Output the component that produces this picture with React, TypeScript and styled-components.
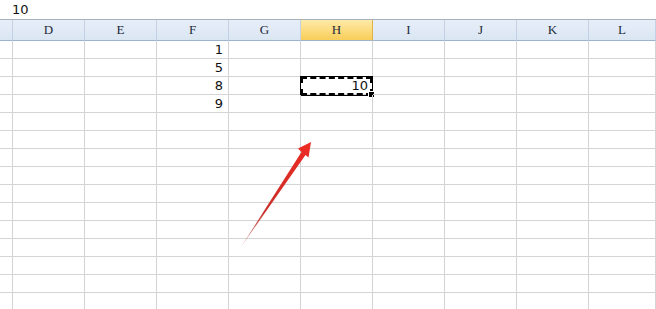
import styled, { createGlobalStyle } from "styled-components";

const GlobalStyle = createGlobalStyle`
  html, body {
    margin: 0;
    padding: 0;
    background: #fff;
    overflow: hidden;
  }
`;

const Sheet = styled.div`
  position: relative;
  width: 656px;
  height: 309px;
  overflow: hidden;
  background: #fff;
  font-family: "DejaVu Sans", "Liberation Sans", sans-serif;
`;

const FormulaBar = styled.div`
  box-sizing: border-box;
  height: 20px;
  padding-left: 12px;
  border-bottom: 1px solid #a9b1ba;
  font-size: 13px;
  line-height: 19px;
  color: #111;
`;

const Grid = styled.div`
  display: grid;
  grid-template-columns: 13px repeat(8, 72px) 1fr;
`;

const HeadCell = styled.div<{ $active?: boolean }>`
  box-sizing: border-box;
  height: 21px;
  display: flex;
  align-items: center;
  justify-content: center;
  font-family: "Liberation Serif", "DejaVu Serif", serif;
  font-size: 13px;
  color: #1c2a3a;
  border-bottom: 1px solid #9fb4cc;
  border-right: 1px solid ${(p) => (p.$active ? "#e1b24a" : "#c3d1e2")};
  background: ${(p) =>
    p.$active
      ? "linear-gradient(#fdeaa8, #fbd978 60%, #f8cd5a)"
      : "linear-gradient(#e6eef8, #dbe6f3)"};
`;

const Cell = styled.div`
  position: relative;
  box-sizing: border-box;
  height: 18px;
  padding-right: 5px;
  border-right: 1px solid #d4d4d4;
  border-bottom: 1px solid #d4d4d4;
  text-align: right;
  font-size: 13px;
  line-height: 17px;
  color: #111;
`;

const Selection = styled.div`
  position: absolute;
  box-sizing: border-box;
  left: -1px;
  top: -1px;
  right: -1px;
  bottom: -2px;
  border: 1px solid #000;
  outline: 2px dashed #000;
  outline-offset: -3px;
  padding-right: 4px;
  text-align: right;
  line-height: 17px;
`;

const FillHandle = styled.span`
  position: absolute;
  right: -3px;
  bottom: -3px;
  width: 5px;
  height: 5px;
  background: #000;
  border: 1px solid #fff;
`;

const Arrow = styled.svg`
  position: absolute;
  left: 0;
  top: 0;
  pointer-events: none;
`;

const columns = ["", "D", "E", "F", "G", "H", "I", "J", "K", "L"];

const data: Record<number, Record<string, string>> = {
  0: { F: "1" },
  1: { F: "5" },
  2: { F: "8", H: "10" },
  3: { F: "9" },
};

export default function App() {
  const rows = Array.from({ length: 15 }, (_, i) => i);
  return (
    <Sheet>
      <GlobalStyle />
      <FormulaBar>10</FormulaBar>
      <Grid>
        {columns.map((c, i) => (
          <HeadCell key={i} $active={c === "H"}>
            {c}
          </HeadCell>
        ))}
        {rows.map((r) =>
          columns.map((c, i) => {
            const v = data[r]?.[c];
            if (r === 2 && c === "H") {
              return (
                <Cell key={`${r}-${i}`}>
                  <Selection>
                    {v}
                    <FillHandle />
                  </Selection>
                </Cell>
              );
            }
            return <Cell key={`${r}-${i}`}>{v}</Cell>;
          })
        )}
      </Grid>
      <Arrow width="656" height="309" viewBox="0 0 656 309">
        <defs>
          <linearGradient id="arrowFill" x1="241" y1="247" x2="311" y2="142" gradientUnits="userSpaceOnUse">
            <stop offset="0" stopColor="#b8483c" stopOpacity="0.5" />
            <stop offset="0.35" stopColor="#c9302a" />
            <stop offset="1" stopColor="#ee2a22" />
          </linearGradient>
        </defs>
        <polygon
          points="311,142 298,148.5 301.5,152 241,247 305.5,155 308.5,157.5"
          fill="url(#arrowFill)"
        />
      </Arrow>
    </Sheet>
  );
}
